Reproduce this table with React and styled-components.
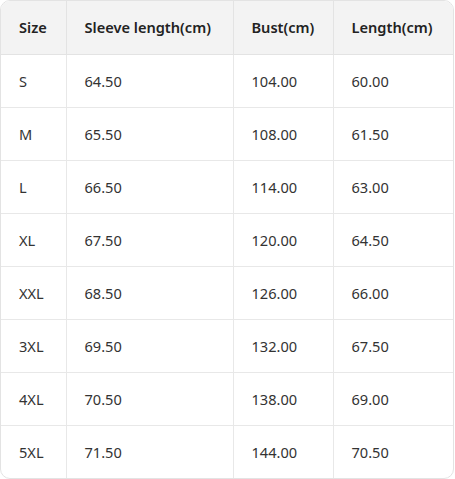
import styled, { createGlobalStyle } from "styled-components";

const GlobalStyle = createGlobalStyle`
  body {
    margin: 0;
    background: #fff;
    font-family: "Noto Sans", "Open Sans", sans-serif;
  }
`;

const Wrapper = styled.div`
  width: 454px;
  border: 1px solid #e3e3e3;
  border-radius: 10px;
  overflow: hidden;
  box-sizing: border-box;
`;

const Table = styled.table`
  width: 100%;
  border-collapse: collapse;
  table-layout: fixed;
  color: #222;
  font-size: 14.6px;
`;

const Head = styled.th`
  box-sizing: border-box;
  width: ${(p) => p.w}px;
  height: 53px;
  padding: 0 0 0 18px;
  text-align: left;
  font-weight: 600;
  white-space: nowrap;
  background: #f3f3f3;
  border-right: 1px solid #e3e3e3;
  border-bottom: 1px solid #e3e3e3;
  &:last-child {
    border-right: none;
  }
`;

const Row = styled.tr`
  &:last-child td {
    border-bottom: none;
  }
`;

const Cell = styled.td`
  box-sizing: border-box;
  height: 53px;
  padding: 0 0 0 18px;
  font-weight: 400;
  color: #333;
  border-right: 1px solid #e8e8e8;
  border-bottom: 1px solid #e8e8e8;
  &:last-child {
    border-right: none;
  }
`;

const columns = [
  { label: "Size", w: 65 },
  { label: "Sleeve length(cm)", w: 167 },
  { label: "Bust(cm)", w: 100 },
  { label: "Length(cm)", w: 120 },
];

const rows = [
  ["S", "64.50", "104.00", "60.00"],
  ["M", "65.50", "108.00", "61.50"],
  ["L", "66.50", "114.00", "63.00"],
  ["XL", "67.50", "120.00", "64.50"],
  ["XXL", "68.50", "126.00", "66.00"],
  ["3XL", "69.50", "132.00", "67.50"],
  ["4XL", "70.50", "138.00", "69.00"],
  ["5XL", "71.50", "144.00", "70.50"],
];

function App() {
  return (
    <>
      <GlobalStyle />
      <Wrapper>
        <Table>
          <thead>
            <tr>
              {columns.map((c) => (
                <Head key={c.label} w={c.w}>
                  {c.label}
                </Head>
              ))}
            </tr>
          </thead>
          <tbody>
            {rows.map((r) => (
              <Row key={r[0]}>
                {r.map((v, i) => (
                  <Cell key={i}>{v}</Cell>
                ))}
              </Row>
            ))}
          </tbody>
        </Table>
      </Wrapper>
    </>
  );
}

export default App;
